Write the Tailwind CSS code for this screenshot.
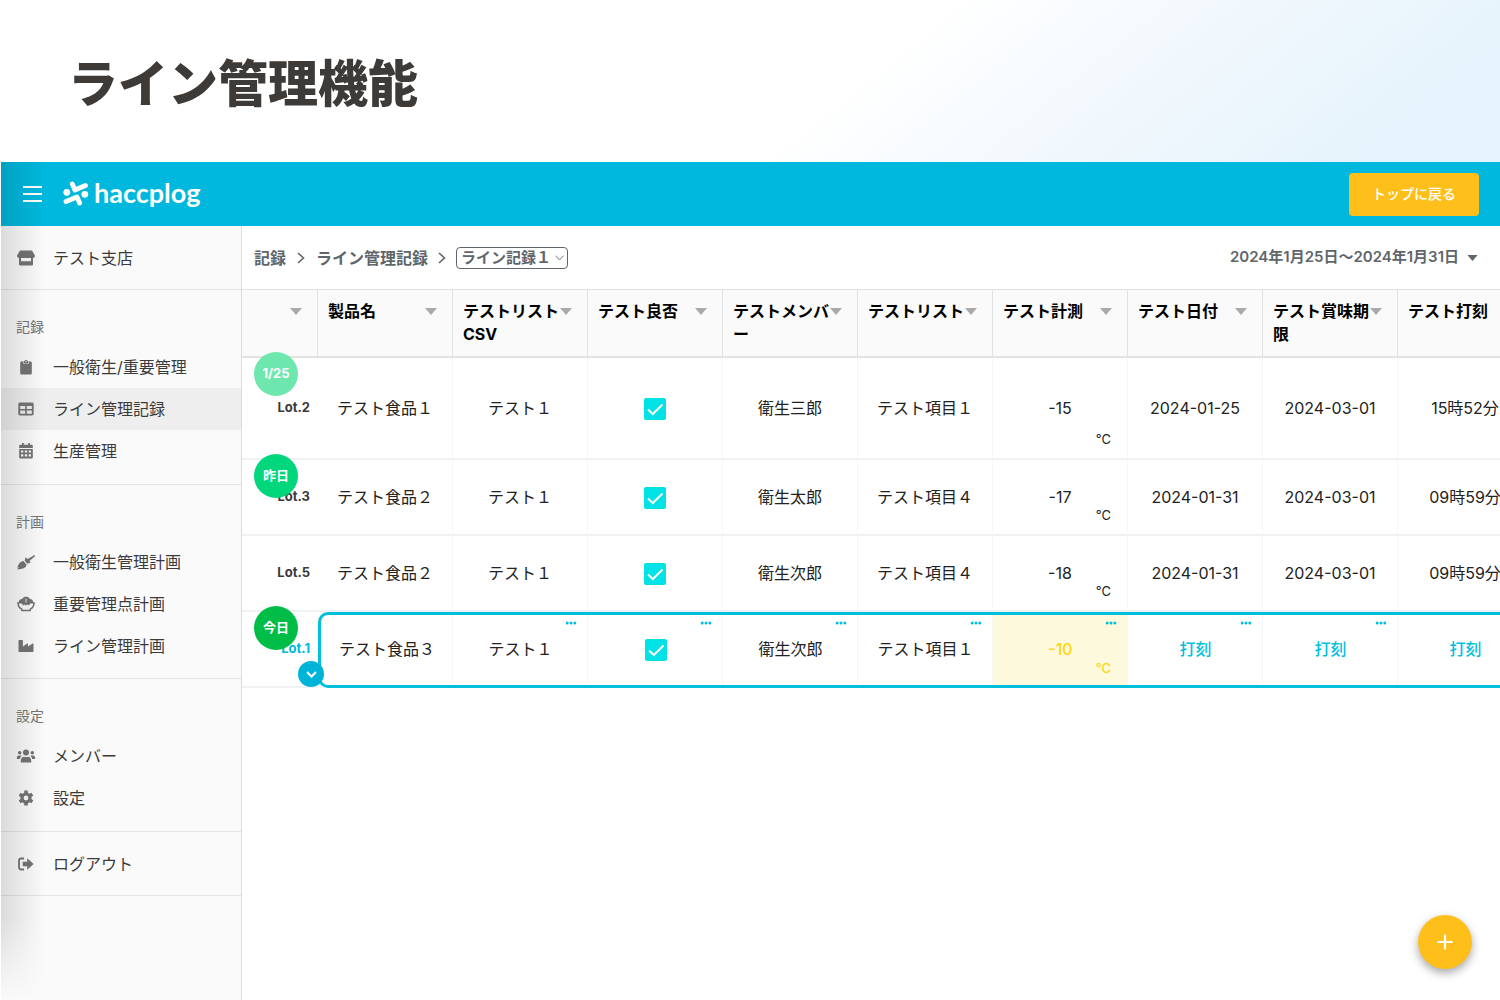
<!DOCTYPE html>
<html lang="ja">
<head>
<meta charset="utf-8">
<meta name="viewport" content="width=device-width, initial-scale=1">
<title>ライン管理機能</title>
<script src="https://cdn.jsdelivr.net/npm/@tailwindcss/browser@4"></script>
</head>
<body class="flex min-h-screen flex-col overflow-x-hidden bg-white font-['Inter','Noto_Sans_CJK_JP',sans-serif] text-base text-[#222]">
<svg class="hidden">
  <symbol id="tri" viewBox="0 0 12 7"><path d="M0 0h12L6 7z" fill="currentColor"/></symbol>
  <symbol id="check" viewBox="0 0 22 22"><path d="M4 11.5l4.800 4.500L18.500 6.500" fill="none" stroke="#fff" stroke-width="2"/></symbol>
  <symbol id="dots" viewBox="0 0 12 4"><g fill="currentColor"><circle cx="2.200" cy="2" r="1.500"/><circle cx="6" cy="2" r="1.500"/><circle cx="9.800" cy="2" r="1.500"/></g></symbol>
  <symbol id="sep" viewBox="0 0 8 12"><path d="M1 1l5.500 5L1 11" fill="none" stroke="currentColor" stroke-width="1.600"/></symbol>
</svg>

<header class="flex h-[162px] shrink-0 items-center bg-[linear-gradient(141deg,#fff_56%,#f1f8fd_74%,#e5f3fc_92%)] px-[68px] pt-[6px]">
  <h1 class="text-[50px] leading-none font-black text-[#3e3a37]">ライン管理機能</h1>
</header>

<div class="relative ml-px flex grow flex-col">
  <div class="flex h-16 items-center bg-[#00b8dd] pr-[21px] pl-[22px] text-white">
    <button type="button" aria-label="メニュー" class="mr-5">
      <svg class="h-4 w-5" viewBox="0 0 20 16"><path d="M0 1h19M0 8h19M0 15h19" stroke="#fff" stroke-width="1.800"/></svg>
    </button>
    <a href="#" class="flex items-center gap-[5px]">
      <svg class="h-[26px] w-[26px]" viewBox="0 0 26 26" fill="none" stroke="#fff" stroke-linecap="round" stroke-linejoin="round" stroke-width="4.800">
        <path d="M9.300 3l2.600 6L22.500 4.500"/><path d="M3 20.500L14 16l2.700 6"/>
        <circle cx="3.800" cy="11.300" r="3.400" fill="#fff" stroke="none"/><circle cx="21.800" cy="13.300" r="3.400" fill="#fff" stroke="none"/>
      </svg>
      <span class="pb-1 font-['Lato',sans-serif] text-[27px] leading-none font-bold">haccplog</span>
    </a>
    <button type="button" class="ml-auto h-[43px] w-[130px] rounded-[4px] bg-[#ffbf1a] text-sm font-medium text-white">トップに戻る</button>
  </div>

  <div class="flex grow">
    <nav class="w-[241px] shrink-0 border-r border-[#dadddf] bg-[#fafafa] text-[#3a3a3a] [&_a]:flex [&_a]:items-center [&_a]:gap-[17px] [&_a]:pl-[15px] [&_section]:border-b [&_section]:border-[#e0e5e6] [&_h2]:flex [&_h2]:h-14 [&_h2]:items-center [&_h2]:pt-[18px] [&_h2]:pl-[15px] [&_h2]:text-sm [&_h2]:text-[#777] [&_li_a]:h-[42px] [&_svg]:size-5 [&_svg]:shrink-0 [&_svg]:text-[#757575]">
      <section>
        <a href="#" class="h-[63px]">
          <svg viewBox="0 0 20 20" fill="currentColor"><path d="M4 2.500h12l3 5c0 1.500-.8 2.500-2 2.500H3C1.800 10 1 9 1 7.500z"/><path d="M3 10h2v3.200h10V10h2v6.200c0 .8-.5 1.300-1.300 1.300H4.300c-.8 0-1.300-.5-1.300-1.300z"/></svg>テスト支店</a>
      </section>
      <section class="pb-[12px]">
        <h2>記録</h2>
        <ul>
          <li><a href="#"><svg viewBox="0 0 20 20" fill="currentColor"><path fill-rule="evenodd" d="M5.500 4.500H7v2h6v-2h1.500c.8 0 1.300.6 1.300 1.300v10.400c0 .8-.5 1.300-1.300 1.300h-9c-.8 0-1.300-.5-1.300-1.300V5.800c0-.7.5-1.300 1.300-1.300z"/><path fill-rule="evenodd" d="M7.500 4.300h.8a1.750 1.750 0 013.400 0h.8v1.700h-5zM10 3.800a.6.6 0 100 1.200.6.6 0 000-1.200z"/></svg>一般衛生/重要管理</a></li>
          <li class="bg-[#eee]"><a href="#"><svg viewBox="0 0 20 20" fill="currentColor"><path fill-rule="evenodd" d="M4 3.500h12c1 0 1.700.7 1.700 1.700v9.600c0 1-.7 1.700-1.700 1.700H4c-1 0-1.700-.7-1.700-1.700V5.200c0-1 .7-1.700 1.700-1.700zM4.200 7v3h5V7zm6.600 0v3h5V7zm-6.600 4.500v3.200h5v-3.200zm6.600 0v3.200h5v-3.200z"/></svg>ライン管理記録</a></li>
          <li><a href="#"><svg viewBox="0 0 20 20" fill="currentColor"><path d="M6 2h1.800v1.800h4.400V2H14v1.800h1.500c.8 0 1.300.5 1.300 1.200v2H3.200V5c0-.7.500-1.200 1.300-1.200H6z"/><path fill-rule="evenodd" d="M3.200 8h13.600v8.300c0 .8-.5 1.200-1.300 1.200h-11c-.8 0-1.300-.4-1.300-1.200zM5 9.500v2h2.300v-2zm3.800 0v2h2.400v-2zm3.900 0v2H15v-2zM5 13.200v2.200h2.300v-2.200zm3.800 0v2.200h2.400v-2.200zm3.900 0v2.200H15v-2.200z"/></svg>生産管理</a></li>
        </ul>
      </section>
      <section class="pb-[11px]">
        <h2>計画</h2>
        <ul>
          <li><a href="#"><svg viewBox="0 0 20 20" fill="currentColor"><path d="M18.500 3l.7 1-5.700 4.900 1.300 1.600-3.500 1.200L8.700 8.500 9.600 5.300l2 1.800z"/><path d="M7.500 9l3.200 3.700c-.8 3-3.700 4.500-9.700 4.500l2-2-1.800.2C2.800 11.500 4.500 9.200 7.500 9z"/></svg>一般衛生管理計画</a></li>
          <li><a href="#"><svg viewBox="0 0 20 20"><path d="M2.800 8.700C2.600 6 4.500 4.900 6 5 7 3.300 8.500 2.700 10 2.700s3 .6 4 2.300c1.500-.1 3.400 1 3.200 3.700z" fill="currentColor"/><path d="M2 8.700h16c0 3.300-1.500 5.300-3.800 6.500v1.300H5.800v-1.300C3.500 14 2 12 2 8.700z" fill="#fafafa" stroke="currentColor" stroke-width="1.500" stroke-linejoin="round"/><path d="M5.500 8.500h9l-1.500 3-1.500-1-1.500 1-1.500-1-1.500 1z" fill="currentColor"/><path d="M10 4.500v4" stroke="#fafafa" stroke-width=".9" fill="none"/></svg>重要管理点計画</a></li>
          <li><a href="#"><svg viewBox="0 0 20 20" fill="currentColor"><path d="M3.300 4h2.800c.5 0 .8.300.8.800v5.700l4.300-3c.5-.3.800 0 .8.400v2.600l4.500-3c.5-.3 1 0 1 .5v7c0 .7-.4 1.100-1 1.100H3.500c-.7 0-1-.4-1-1V4.800c0-.5.300-.8.800-.8z"/></svg>ライン管理計画</a></li>
        </ul>
      </section>
      <section class="pb-[12px]">
        <h2>設定</h2>
        <ul>
          <li><a href="#"><svg viewBox="0 0 20 20" fill="currentColor"><circle cx="10" cy="6.500" r="3"/><circle cx="3.700" cy="6.700" r="1.800"/><circle cx="16.300" cy="6.700" r="1.800"/><path d="M4.700 16c0-3.700 1.300-5.200 3.500-5.200 1.200.5 2.400.5 3.600 0 2.200 0 3.500 1.500 3.500 5.200 0 .4-.3.500-.6.500H5.300c-.3 0-.6-.1-.6-.5zM.8 12.500c0-2 .7-3 2.200-3h1.500c.5 0 .9.100 1.200.4-1 .7-1.700 1.700-1.900 3.100H1.300c-.4 0-.5-.2-.5-.5zM19.200 12.500c0-2-.7-3-2.200-3h-1.500c-.5 0-.9.100-1.200.4 1 .7 1.700 1.700 1.900 3.100h2.500c.4 0 .5-.2.5-.5z"/></svg>メンバー</a></li>
          <li><a href="#"><svg viewBox="0 0 20 20"><circle cx="10" cy="10" r="4" fill="none" stroke="currentColor" stroke-width="3.200"/><g stroke="currentColor" stroke-width="3.600"><path d="M10 2.600v3M10 14.400v3M3.600 6.300l2.600 1.500M13.800 12.200l2.600 1.500M3.600 13.700l2.600-1.500M13.800 7.800l2.600-1.500"/></g></svg>設定</a></li>
        </ul>
      </section>
      <section>
        <a href="#" class="h-[63px]"><svg viewBox="0 0 20 20"><path d="M8 4.500H5.200C3.900 4.500 3 5.400 3 6.700v6.600c0 1.300.9 2.200 2.200 2.200H8" fill="none" stroke="currentColor" stroke-width="1.800"/><path d="M11.500 4.800l5.800 5.200-5.800 5.200V12H7V8h4.500z" fill="currentColor" stroke="currentColor" stroke-width=".6" stroke-linejoin="round"/></svg>ログアウト</a>
      </section>
    </nav>

    <main class="min-w-0 grow">
      <div class="flex h-[63px] items-center pr-[22px] pl-3 font-semibold text-[#5f666b]">
        <a href="#">記録</a>
        <svg class="mx-[11px] h-3 w-2"><use href="#sep"/></svg>
        <a href="#">ライン管理記録</a>
        <svg class="mx-[10px] h-3 w-2"><use href="#sep"/></svg>
        <div class="relative">
          <select aria-label="ライン記録" class="block h-[22px] w-28 appearance-none rounded-[4px] border border-[#5f666b] bg-white pl-1 text-[15px] leading-5 font-semibold"><option>ライン記録１</option></select>
          <svg class="pointer-events-none absolute top-2 right-1 h-[6px] w-[9px]" viewBox="0 0 9 6"><path d="M.5.700l4 4.300 4-4.300" fill="none" stroke="#777" stroke-width="1"/></svg>
        </div>
        <button type="button" class="ml-auto flex items-center gap-2 text-[15px] font-semibold">2024年1月25日〜2024年1月31日<svg class="h-[6px] w-[11px]" viewBox="0 0 12 7"><use href="#tri"/></svg></button>
      </div>

      <div class="overflow-hidden">
        <table class="w-[1291px] table-fixed border-separate border-spacing-0 text-center [&_th]:border-t [&_th]:border-r [&_th]:border-b-2 [&_th]:border-[#e2e2e2] [&_th]:bg-[#fafafa] [&_th]:pt-[10px] [&_th]:pr-[15px] [&_th]:pl-[10px] [&_th]:text-left [&_th]:align-top [&_th]:text-base [&_th]:leading-[23px] [&_th]:font-bold [&_th]:text-black [&_th>div]:flex [&_th>div]:justify-between [&_th_svg]:mt-2 [&_th_svg]:h-[7px] [&_th_svg]:w-3 [&_th_svg]:shrink-0 [&_th_svg]:text-[#aaa] [&_td]:relative [&_td]:border-r [&_td]:border-b-2 [&_td]:border-r-[#f6f6f6] [&_td]:border-b-[#f0f1f2] [&_td]:p-0 [&_td:first-child]:border-r-0 [&_td:first-child]:pr-2 [&_td:first-child]:text-right [&_td:first-child]:text-[13px] [&_td:first-child]:font-bold [&_td:first-child]:text-[#3a3a3a] [&_label]:inline-grid [&_label]:align-middle [&_label>*]:col-start-1 [&_label>*]:row-start-1 [&_label>*]:size-[22px] [&_input]:appearance-none [&_input]:rounded-[2px] [&_input]:bg-[#00e2e6]">
          <colgroup><col class="w-[76px]"><col span="9" class="w-[135px]"></colgroup>
          <thead>
            <tr class="h-[69px]">
              <th aria-label="ロット"><div><span></span><svg><use href="#tri"/></svg></div></th>
              <th><div>製品名<svg><use href="#tri"/></svg></div></th>
              <th><div>テストリストCSV<svg><use href="#tri"/></svg></div></th>
              <th><div>テスト良否<svg><use href="#tri"/></svg></div></th>
              <th><div class="break-all [line-break:anywhere]">テストメンバー<svg><use href="#tri"/></svg></div></th>
              <th><div>テストリスト<svg><use href="#tri"/></svg></div></th>
              <th><div>テスト計測<svg><use href="#tri"/></svg></div></th>
              <th><div>テスト日付<svg><use href="#tri"/></svg></div></th>
              <th><div>テスト賞味期限<svg><use href="#tri"/></svg></div></th>
              <th><div>テスト打刻<svg><use href="#tri"/></svg></div></th>
            </tr>
          </thead>
          <tbody>
            <tr class="h-[102px]">
              <td>Lot.2<span class="absolute -top-[6px] left-3 grid size-11 place-items-center rounded-full bg-[#6ee7ae] text-white">1/25</span></td>
              <td>テスト食品１</td>
              <td>テスト１</td>
              <td><label><input type="checkbox" checked aria-label="Lot.2 良否"><svg class="z-10"><use href="#check"/></svg></label></td>
              <td>衛生三郎</td>
              <td>テスト項目１</td>
              <td>-15<span class="absolute right-4 bottom-[9px] text-[13px] leading-5">°C</span></td>
              <td>2024-01-25</td>
              <td>2024-03-01</td>
              <td>15時52分</td>
            </tr>
            <tr class="h-[76px]">
              <td>Lot.3<span class="absolute -top-[6px] left-3 grid size-11 place-items-center rounded-full bg-[#00d67b] text-white">昨日</span></td>
              <td>テスト食品２</td>
              <td>テスト１</td>
              <td><label><input type="checkbox" checked aria-label="Lot.3 良否"><svg class="z-10"><use href="#check"/></svg></label></td>
              <td>衛生太郎</td>
              <td>テスト項目４</td>
              <td>-17<span class="absolute right-4 bottom-[9px] text-[13px] leading-5">°C</span></td>
              <td>2024-01-31</td>
              <td>2024-03-01</td>
              <td>09時59分</td>
            </tr>
            <tr class="h-[76px]">
              <td>Lot.5</td>
              <td>テスト食品２</td>
              <td>テスト１</td>
              <td><label><input type="checkbox" checked aria-label="Lot.5 良否"><svg class="z-10"><use href="#check"/></svg></label></td>
              <td>衛生次郎</td>
              <td>テスト項目４</td>
              <td>-18<span class="absolute right-4 bottom-[9px] text-[13px] leading-5">°C</span></td>
              <td>2024-01-31</td>
              <td>2024-03-01</td>
              <td>09時59分</td>
            </tr>
            <tr class="h-[76px] [&_td:not(:first-child)]:border-y-3 [&_td:not(:first-child)]:border-r-0 [&_td:not(:first-child)]:border-y-[#00bfdc] [&_td:not(:first-child)]:pb-[2px] [&_td:not(:first-child)]:shadow-[inset_-1px_0_#f6f6f6] [&_td>button]:absolute [&_td>button]:top-[6px] [&_td>button]:right-[11px] [&_td>button]:text-[#00bfdc] [&_td>button>svg]:block [&_td>button>svg]:h-1 [&_td>button>svg]:w-3 [&_a]:font-medium [&_a]:text-[#00c0de]">
              <td class="z-10"><span class="text-[#00b8dd]">Lot.1</span><span class="absolute -top-[6px] left-3 grid size-11 place-items-center rounded-full bg-[#00bd48] text-white">今日</span>
                <button type="button" aria-label="開く" class="top-auto! -right-[6px]! -bottom-[1px] grid size-[26px] place-items-center rounded-full bg-[#00b4d8]"><svg class="h-[7px]! w-[11px]!" viewBox="0 0 11 7"><path d="M1 1l4.500 4.500L10 1" fill="none" stroke="#fff" stroke-width="2"/></svg></button></td>
              <td class="rounded-l-[10px] border-l-3 border-l-[#00bfdc]">テスト食品３</td>
              <td>テスト１<button type="button" aria-label="操作"><svg><use href="#dots"/></svg></button></td>
              <td><label><input type="checkbox" checked aria-label="Lot.1 良否"><svg class="z-10"><use href="#check"/></svg></label><button type="button" aria-label="操作"><svg><use href="#dots"/></svg></button></td>
              <td>衛生次郎<button type="button" aria-label="操作"><svg><use href="#dots"/></svg></button></td>
              <td>テスト項目１<button type="button" aria-label="操作"><svg><use href="#dots"/></svg></button></td>
              <td class="bg-[#fdf9dc] font-medium text-[#ffd60a]">-10<span class="absolute right-[17px] bottom-[7px] text-[13px] leading-5">°C</span><button type="button" aria-label="操作"><svg><use href="#dots"/></svg></button></td>
              <td><a href="#">打刻</a><button type="button" aria-label="操作"><svg><use href="#dots"/></svg></button></td>
              <td><a href="#">打刻</a><button type="button" aria-label="操作"><svg><use href="#dots"/></svg></button></td>
              <td><a href="#">打刻</a><button type="button" aria-label="操作"><svg><use href="#dots"/></svg></button></td>
            </tr>
          </tbody>
        </table>
      </div>
    </main>
  </div>

  <div class="pointer-events-none absolute inset-y-0 left-0 w-11 bg-linear-to-r from-black/12 to-transparent mask-[linear-gradient(to_bottom,black_90%,transparent)]"></div>
</div>

<button type="button" aria-label="追加" class="fixed right-7 bottom-[31px] grid size-[54px] place-items-center rounded-full bg-[#ffbf1a] shadow-[0_4px_10px_rgba(0,0,0,0.35)]">
  <svg class="size-4" viewBox="0 0 16 16"><path d="M8 .5v15M.5 8h15" stroke="#fff" stroke-width="2.200"/></svg>
</button>
</body>
</html>
